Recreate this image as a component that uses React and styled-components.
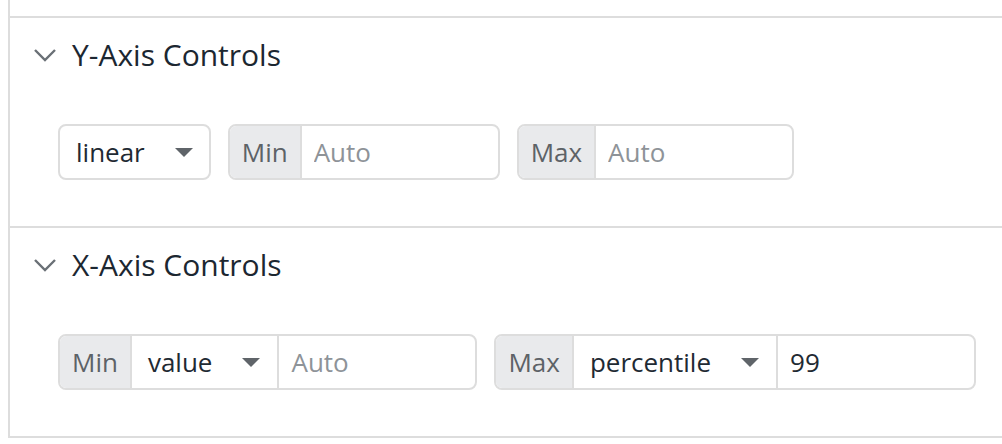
import React from "react";
import styled, {createGlobalStyle, css} from "styled-components";

const GlobalStyle = createGlobalStyle`
    html, body {
        margin: 0;
        padding: 0;
        background: #ffffff;
        overflow: hidden;
    }
    body {
        font-family: "Open Sans", "Noto Sans", sans-serif;
    }
`;

const Panel = styled.div`
    margin-left: 8px;
    border-left: 2px solid #dddddd;
    border-bottom: 2px solid #dddddd;
`;

// the tail of the section above, cut off by the screenshot
const PrevSection = styled.div`
    height: 16px;
`;

const Section = styled.section`
    border-top: 2px solid #dddddd;
    padding: 16px 0 46px 23px;
`;

const Header = styled.div`
    display: flex;
    align-items: center;
    gap: 15px;
    height: 41px;
    margin-bottom: 49px;
    cursor: pointer;
`;

const Title = styled.h2`
    margin: 0;
    font-size: 30px;
    font-weight: 400;
    line-height: 41px;
    color: #1c2731;
`;

const Row = styled.div`
    display: flex;
    align-items: center;
    gap: 17px;
    padding-left: 25px;
`;

const boxBorder = css`
    border: 2px solid #dddddd;
    border-radius: 8px;
`;

const Group = styled.div`
    ${boxBorder};
    display: inline-flex;
    height: 56px;
    box-sizing: border-box;
    overflow: hidden;
    background: white;
`;

const Addon = styled.span`
    display: flex;
    align-items: center;
    padding: 0 12px;
    background: #e9eaec;
    border-right: 2px solid #dddddd;
    font-size: 26px;
    color: #5d6267;
`;

const Select = styled.div`
    display: flex;
    align-items: center;
    padding: 0 16px;
    font-size: 26px;
    color: #1f2a33;
    background: white;
    cursor: pointer;
    ${props => props.$standalone ? css`
        ${boxBorder};
        height: 56px;
        box-sizing: border-box;
    ` : css`
        padding-right: 17px;
        border-right: 2px solid #dddddd;
    `}
`;

const Caret = styled.span`
    width: 0;
    height: 0;
    margin-left: 30px;
    border-left: 9px solid transparent;
    border-right: 9px solid transparent;
    border-top: 9px solid #5f6469;
`;

const Input = styled.input`
    width: 196px;
    box-sizing: border-box;
    border: none;
    outline: none;
    padding: 0 12px;
    font-family: "Open Sans", "Noto Sans", sans-serif;
    font-size: 26px;
    color: #1f2a33;
    background: transparent;
    &::placeholder {
        color: #8e9398;
    }
`;

const Chevron = () => (
    <svg width="24" height="14" viewBox="0 0 24 14">
        <polyline points="2,2 12,12 22,2" fill="none" stroke="#6a7076" strokeWidth="2.4"/>
    </svg>
);

const Dropdown = ({value, standalone}) => (
    <Select $standalone={standalone}>
        {value}
        <Caret/>
    </Select>
);

const ControlSection = ({title, children}) => (
    <Section>
        <Header>
            <Chevron/>
            <Title>{title}</Title>
        </Header>
        <Row>{children}</Row>
    </Section>
);

const App = () => {
    return (
        <>
            <GlobalStyle/>
            <Panel>
                <PrevSection/>
                <ControlSection title="Y-Axis Controls">
                    <Dropdown value="linear" standalone/>
                    <Group>
                        <Addon>Min</Addon>
                        <Input placeholder="Auto"/>
                    </Group>
                    <Group>
                        <Addon>Max</Addon>
                        <Input placeholder="Auto"/>
                    </Group>
                </ControlSection>
                <ControlSection title="X-Axis Controls">
                    <Group>
                        <Addon>Min</Addon>
                        <Dropdown value="value"/>
                        <Input placeholder="Auto"/>
                    </Group>
                    <Group>
                        <Addon>Max</Addon>
                        <Dropdown value="percentile"/>
                        <Input defaultValue="99"/>
                    </Group>
                </ControlSection>
            </Panel>
        </>
    );
};

export default App;
